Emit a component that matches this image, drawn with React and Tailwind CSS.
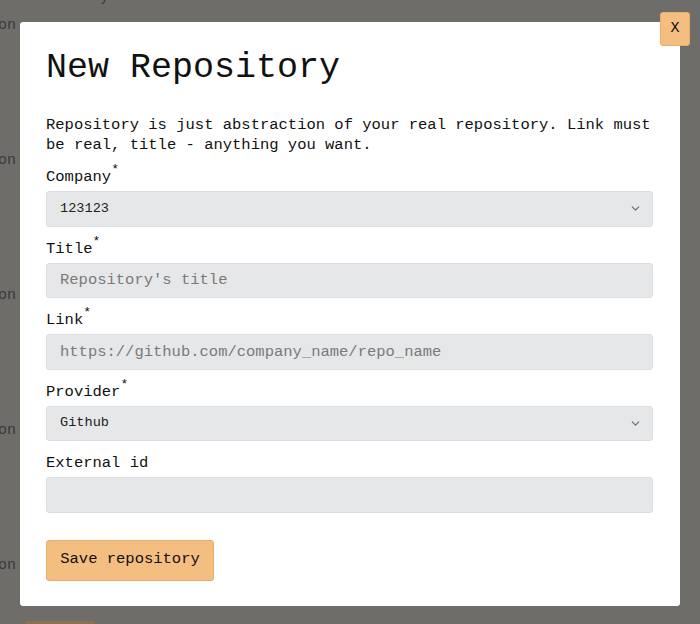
import { ChevronDown } from 'lucide-react';

const mono = { fontFamily: '"Liberation Mono", "DejaVu Sans Mono", monospace' };

function Label({ children, required }) {
  return (
    <label className="flex items-start text-[15.5px] leading-[20px] text-[#111]">
      {children}
      {required && <span className="text-[13px] leading-[10px] -mt-[2px]">*</span>}
    </label>
  );
}

function Field({ label, required, children }) {
  return (
    <div className="flex flex-col gap-[4px]">
      <Label required={required}>{label}</Label>
      {children}
    </div>
  );
}

function TextInput({ placeholder }) {
  return (
    <input
      type="text"
      placeholder={placeholder}
      className="w-full h-[35.5px] px-[13px] bg-[#e6e7e9] border border-[#dcdde0] rounded-[3px] text-[15.5px] text-[#222] placeholder:text-[#7a7a7a] outline-none"
      style={mono}
    />
  );
}

function Select({ value }) {
  return (
    <div className="w-full h-[35.5px] bg-[#e6e7e9] border border-[#dcdde0] rounded-[3px] flex items-center justify-between pl-[13px] pr-[10px]">
      <span className="text-[13.6px] text-[#222]">{value}</span>
      <ChevronDown className="text-[#666]" size={13} strokeWidth={2} />
    </div>
  );
}

export default function App() {
  return (
    <div className="relative w-[700px] h-[624px] overflow-hidden bg-[#6f6d6a]" style={mono}>
      {/* dimmed page behind the overlay */}
      <div className="flex flex-col gap-[115px] -mt-[12px] -ml-[2px] text-[15px] leading-[20px] text-[#3b3a38]">
        <div className="pl-[102px]">y</div>
        <div className="-mt-[107px]">on</div>
        <div>on</div>
        <div>on</div>
        <div>on</div>
        <div>on</div>
        <div className="ml-[27px] -mt-[70px] w-[70px] h-[8px] bg-[#8a7250] rounded-[3px]" />
      </div>

      {/* overlay with the modal */}
      <div className="absolute inset-0 pl-[20px] pt-[22px]">
        <div className="relative w-[660px] h-[584px] bg-white rounded-[3px] pl-[26px] pr-[27px] pt-[25px] flex flex-col">
          <button className="absolute -top-[10px] -right-[10px] w-[30px] h-[34px] bg-[#f4be80] border border-[#eaae6c] rounded-[3px] text-[15px] text-[#111] flex items-center justify-center">
            X
          </button>

          <h2 className="text-[35px] leading-[42px] text-[#111]">New Repository</h2>

          <p className="mt-[26px] text-[15.5px] leading-[20px] text-[#111]">
            Repository is just abstraction of your real repository. Link must be real, title - anything you want.
          </p>

          <div className="mt-[12px] flex flex-col gap-3">
            <Field label="Company" required>
              <Select value="123123" />
            </Field>
            <Field label="Title" required>
              <TextInput placeholder="Repository's title" />
            </Field>
            <Field label="Link" required>
              <TextInput placeholder="https://github.com/company_name/repo_name" />
            </Field>
            <Field label="Provider" required>
              <Select value="Github" />
            </Field>
            <Field label="External id">
              <TextInput placeholder="" />
            </Field>
          </div>

          <div className="mt-[27px]">
            <button className="h-[41px] w-[168px] bg-[#f4be80] border border-[#eaae6c] rounded-[3px] text-[15.5px] text-[#111]">
              Save repository
            </button>
          </div>
        </div>
      </div>
    </div>
  );
}
